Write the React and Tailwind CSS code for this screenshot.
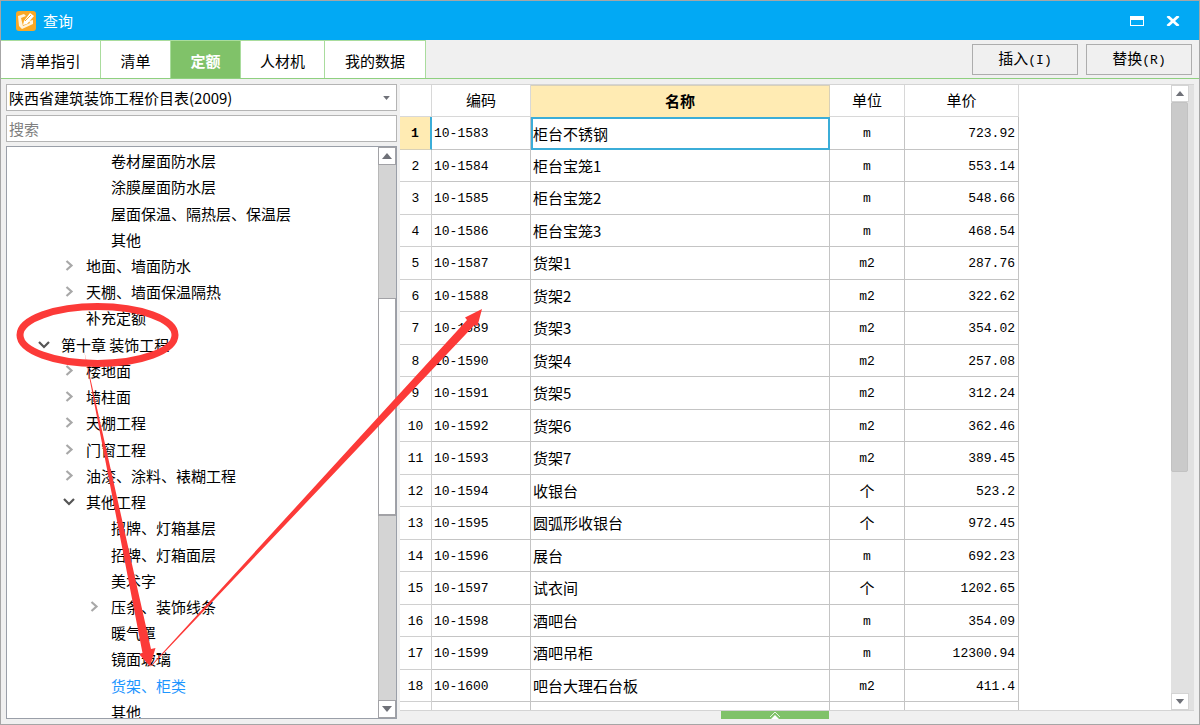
import React from 'react';

const tabs = [
    { label: '清单指引', width: 'w-[100px]' },
    { label: '清单', width: 'w-[70px]' },
    { label: '定额', width: 'w-[70px]', active: true },
    { label: '人材机', width: 'w-[84px]' },
    { label: '我的数据', width: 'w-[101px]' },
];

const tree = [
    { label: '卷材屋面防水层', level: 4 },
    { label: '涂膜屋面防水层', level: 4 },
    { label: '屋面保温、隔热层、保温层', level: 4 },
    { label: '其他', level: 4 },
    { label: '地面、墙面防水', level: 3, state: 'closed' },
    { label: '天棚、墙面保温隔热', level: 3, state: 'closed' },
    { label: '补充定额', level: 3 },
    { label: '第十章 装饰工程', level: 2, state: 'open' },
    { label: '楼地面', level: 3, state: 'closed' },
    { label: '墙柱面', level: 3, state: 'closed' },
    { label: '天棚工程', level: 3, state: 'closed' },
    { label: '门窗工程', level: 3, state: 'closed' },
    { label: '油漆、涂料、裱糊工程', level: 3, state: 'closed' },
    { label: '其他工程', level: 3, state: 'open' },
    { label: '招牌、灯箱基层', level: 4 },
    { label: '招牌、灯箱面层', level: 4 },
    { label: '美术字', level: 4 },
    { label: '压条、装饰线条', level: 4, state: 'closed' },
    { label: '暖气罩', level: 4 },
    { label: '镜面玻璃', level: 4 },
    { label: '货架、柜类', level: 4, selected: true },
    { label: '其他', level: 4 },
];

const rows = [
    ['10-1583', '柜台不锈钢', 'm', '723.92'],
    ['10-1584', '柜台宝笼1', 'm', '553.14'],
    ['10-1585', '柜台宝笼2', 'm', '548.66'],
    ['10-1586', '柜台宝笼3', 'm', '468.54'],
    ['10-1587', '货架1', 'm2', '287.76'],
    ['10-1588', '货架2', 'm2', '322.62'],
    ['10-1589', '货架3', 'm2', '354.02'],
    ['10-1590', '货架4', 'm2', '257.08'],
    ['10-1591', '货架5', 'm2', '312.24'],
    ['10-1592', '货架6', 'm2', '362.46'],
    ['10-1593', '货架7', 'm2', '389.45'],
    ['10-1594', '收银台', '个', '523.2'],
    ['10-1595', '圆弧形收银台', '个', '972.45'],
    ['10-1596', '展台', 'm', '692.23'],
    ['10-1597', '试衣间', '个', '1202.65'],
    ['10-1598', '酒吧台', 'm', '354.09'],
    ['10-1599', '酒吧吊柜', 'm', '12300.94'],
    ['10-1600', '吧台大理石台板', 'm2', '411.4'],
];

const indent = {
    2: 'pl-[29px]',
    3: 'pl-[54px]',
    4: 'pl-[79px]',
};

const mono = "font-['Liberation_Mono','Noto_Sans_CJK_SC',monospace] text-[13px]";
const cell = 'border-r border-b border-[#c4c4c4] p-0';
const headCell = 'border-r border-b border-[#d8d8d8] p-0 pb-[1px] font-normal';

function Triangle({ down, className }) {
    return (
        <svg viewBox="0 0 10 6" className={className} fill="#6f7178" aria-hidden="true">
            <path d={down ? 'M0 0H10L5 6Z' : 'M0 6H10L5 0Z'} />
        </svg>
    );
}

function Chevron({ state }) {
    if (state === 'open') {
        return (
            <svg viewBox="0 0 12 12" className="size-3" fill="none" stroke="#555" strokeWidth="2.2" aria-hidden="true">
                <path d="M1 3L6 8L11 3" />
            </svg>
        );
    }
    return (
        <svg viewBox="0 0 12 12" className="size-3" fill="none" stroke="#a8a8a8" strokeWidth="2.2" aria-hidden="true">
            <path d="M3.5 1L8.5 5.5L3.5 10" />
        </svg>
    );
}

function TitleBar() {
    return (
        <header className="flex h-[39px] shrink-0 items-center bg-[#02a9f4] pl-[15px] pr-[19px] text-white">
            <svg viewBox="0 0 20 20" className="size-5" aria-hidden="true">
                <rect width="20" height="20" rx="3" fill="#f9a825" />
                <path d="M2 5L8 3L10 5L5 7L7 15L14 12L13 10L17 9L17 13L6 18L3 15Z" fill="#fff3dc" />
                <path d="M14 2L18 5L11 13L7 14L8 10Z" fill="#fff" />
                <path d="M9 10L15 4" stroke="#f9a825" strokeWidth="1" />
            </svg>
            <h1 className="ml-[7px] text-[15px]">查询</h1>
            <div className="ml-auto flex items-center gap-[22px]">
                <button type="button" aria-label="最大化">
                    <svg viewBox="0 0 14 10" className="h-[10px] w-[14px]" fill="none" stroke="#fff" aria-hidden="true">
                        <rect x="0.5" y="0.5" width="13" height="9" />
                        <path d="M0 2H14" strokeWidth="4" />
                    </svg>
                </button>
                <button type="button" aria-label="关闭">
                    <svg viewBox="0 0 14 10" className="h-[10px] w-[14px]" fill="none" stroke="#fff" strokeWidth="2.8" aria-hidden="true">
                        <path d="M1.5 0L12.5 10M12.5 0L1.5 10" />
                    </svg>
                </button>
            </div>
        </header>
    );
}

function Toolbar() {
    return (
        <div className="flex h-[39px] shrink-0 justify-between border-b border-[#8fd080]">
            <nav className="flex">
                {tabs.map((tab) => (
                    <button
                        key={tab.label}
                        type="button"
                        className={`${tab.width} border-t border-r border-[#a9dc9d] pt-[2px] ${tab.active ? 'bg-[#80c269] font-bold text-white' : 'bg-white'}`}
                    >
                        {tab.label}
                    </button>
                ))}
            </nav>
            <div className="flex gap-2 pt-1 pr-[7px]">
                <button type="button" className="h-[31px] w-[106px] border border-[#adadad]">
                    插入<span className={mono}>(I)</span>
                </button>
                <button type="button" className="h-[31px] w-[106px] border border-[#adadad]">
                    替换<span className={mono}>(R)</span>
                </button>
            </div>
        </div>
    );
}

function Sidebar() {
    return (
        <aside className="flex w-[391px] shrink-0 flex-col gap-1">
            <div className="relative h-[27px] shrink-0">
                <select aria-label="定额库" className="size-full appearance-none border border-[#b4b4b4] bg-white pl-[2px]">
                    <option>陕西省建筑装饰工程价目表(2009)</option>
                </select>
                <Triangle down className="pointer-events-none absolute top-3 right-[7px] h-1 w-[7px]" />
            </div>
            <input
                type="text"
                aria-label="搜索"
                placeholder="搜索"
                className="h-[27px] shrink-0 border border-[#b4b4b4] bg-white pl-[2px] placeholder:text-[#808080]"
            />
            <div className="flex min-h-0 flex-1 overflow-hidden border border-[#9a9fa8] bg-white">
                <ul className="grid h-[578px] min-w-0 flex-1 auto-rows-fr pt-[1px]">
                    {tree.map((node, i) => (
                        <li key={i} className={`flex items-center ${indent[node.level]}`}>
                            <span className="w-[25px] pl-[2px]">{node.state && <Chevron state={node.state} />}</span>
                            <button type="button" className={`whitespace-nowrap ${node.selected ? 'text-[#1e96ff]' : ''}`}>
                                {node.label}
                            </button>
                        </li>
                    ))}
                </ul>
                <div className="flex w-[18px] flex-col bg-[#d4d4d4]">
                    <button type="button" aria-label="向上" className="flex h-[18px] shrink-0 items-center justify-center border border-[#a2a2a6] bg-white">
                        <Triangle className="h-[6px] w-3" />
                    </button>
                    <div className="flex-[133] border-l border-[#b8b8b8]" />
                    <div className="flex-[216] border border-b-2 border-[#a2a2a6] bg-white" />
                    <div className="flex-[185] border-l border-[#b8b8b8]" />
                    <button type="button" aria-label="向下" className="flex h-[18px] shrink-0 items-center justify-center border border-[#a2a2a6] bg-white">
                        <Triangle down className="h-[6px] w-3" />
                    </button>
                </div>
            </div>
        </aside>
    );
}

function QuotaTable() {
    return (
        <table className="w-[619px] table-fixed border-separate border-spacing-0">
            <colgroup>
                <col className="w-8" />
                <col className="w-[99px]" />
                <col className="w-[299px]" />
                <col className="w-[75px]" />
                <col className="w-[114px]" />
            </colgroup>
            <thead>
                <tr className="h-8">
                    <th className={headCell} aria-label="序号" />
                    <th className={headCell}>编码</th>
                    <th className="border-t border-r border-[#d8d0b8] bg-[#ffebb3] p-0 pb-[2px] font-bold">名称</th>
                    <th className={headCell}>单位</th>
                    <th className={headCell}>单价</th>
                </tr>
            </thead>
            <tbody>
                {rows.map(([code, name, unit, price], i) => (
                    <tr key={code} className="odd:h-[33px] even:h-8">
                        <td
                            className={`border-b p-0 pt-[2px] text-center ${mono} ${i === 0 ? 'border-r-2 border-r-[#3badd8] border-b-[#d8d0b8] bg-[#ffebb3] font-bold' : 'border-r border-[#d0d0d0]'}`}
                        >
                            {i + 1}
                        </td>
                        <td className={`${cell} ${mono} pt-[2px] pl-[2px]`}>{code}</td>
                        {/* the focused cell */}
                        <td className={i === 0 ? 'border-2 border-[#3badd8] p-0' : `${cell} pl-[2px]`}>{name}</td>
                        <td className={`${cell} text-center ${unit === '个' ? '' : `${mono} pt-[2px]`}`}>{unit}</td>
                        <td className={`${cell} ${mono} pt-[2px] pr-[3px] text-right`}>{price}</td>
                    </tr>
                ))}
                <tr className="h-[33px]">
                    <td className="border-r border-[#d0d0d0]" />
                    <td className={cell} />
                    <td className={cell} />
                    <td className={cell} />
                    <td className={cell} />
                </tr>
            </tbody>
        </table>
    );
}

function ResultPane() {
    return (
        <main className="flex min-w-0 flex-1 flex-col">
            <div className="flex min-h-0 flex-1 overflow-hidden border-t border-b border-[#d4d4d4] bg-white">
                <div className="min-w-0 flex-1">
                    <QuotaTable />
                </div>
                <div className="flex w-[18px] flex-col bg-[#e1e1e1]">
                    <button type="button" aria-label="向上" className="flex h-[17px] shrink-0 items-center justify-center border border-[#d4d4d4] bg-white">
                        <Triangle className="h-[5px] w-[10px]" />
                    </button>
                    <div className="mr-[1px] flex-[369] rounded-xs border border-[#c2c2c2] bg-[#cacaca]" />
                    <div className="flex-[222]" />
                    <button type="button" aria-label="向下" className="flex h-[17px] shrink-0 items-center justify-center border border-[#d4d4d4] bg-white">
                        <Triangle down className="h-[5px] w-[10px]" />
                    </button>
                </div>
                <div className="w-[5px] bg-[#e1e1e1]" />
            </div>
            <button type="button" aria-label="展开" className="ml-[321px] flex h-2 w-[108px] shrink-0 justify-center bg-[#80c269]">
                <svg viewBox="0 0 12 8" className="h-2 w-3" fill="none" stroke="#fff" aria-hidden="true">
                    <path d="M1 6L6 1L11 6" strokeOpacity="0.8" />
                    <path d="M2 8L6 4L10 8Z" fill="#fff" stroke="none" />
                </svg>
            </button>
        </main>
    );
}

// red marker strokes: chapter -> category -> result rows
function Annotations() {
    return (
        <svg viewBox="1 1 500 700" className="pointer-events-none absolute top-0 left-0 h-[700px] w-[500px]" fill="#fc3a38" aria-hidden="true">
            <ellipse cx="97.5" cy="335" rx="77.5" ry="28.5" fill="none" stroke="#fc3a38" strokeWidth="7" />
            <path d="M84 350L151 649L155.5 648L150 666.5L139 654L142.5 653Z" />
            <path d="M150 666.5L467 320L465 317.5L482 309L477.5 326L474.5 325L152 665.5Z" />
        </svg>
    );
}

export default function App() {
    return (
        <div className="relative flex h-screen flex-col overflow-hidden border border-[#a6a6a6] bg-[#f0f0f0] font-['Noto_Sans_CJK_SC',sans-serif] text-[15px] leading-5 text-black">
            <TitleBar />
            <Toolbar />
            <div className="flex min-h-0 flex-1 gap-[3px] px-[5px] pt-[5px] pb-[5px]">
                <Sidebar />
                <ResultPane />
            </div>
            <Annotations />
        </div>
    );
}
